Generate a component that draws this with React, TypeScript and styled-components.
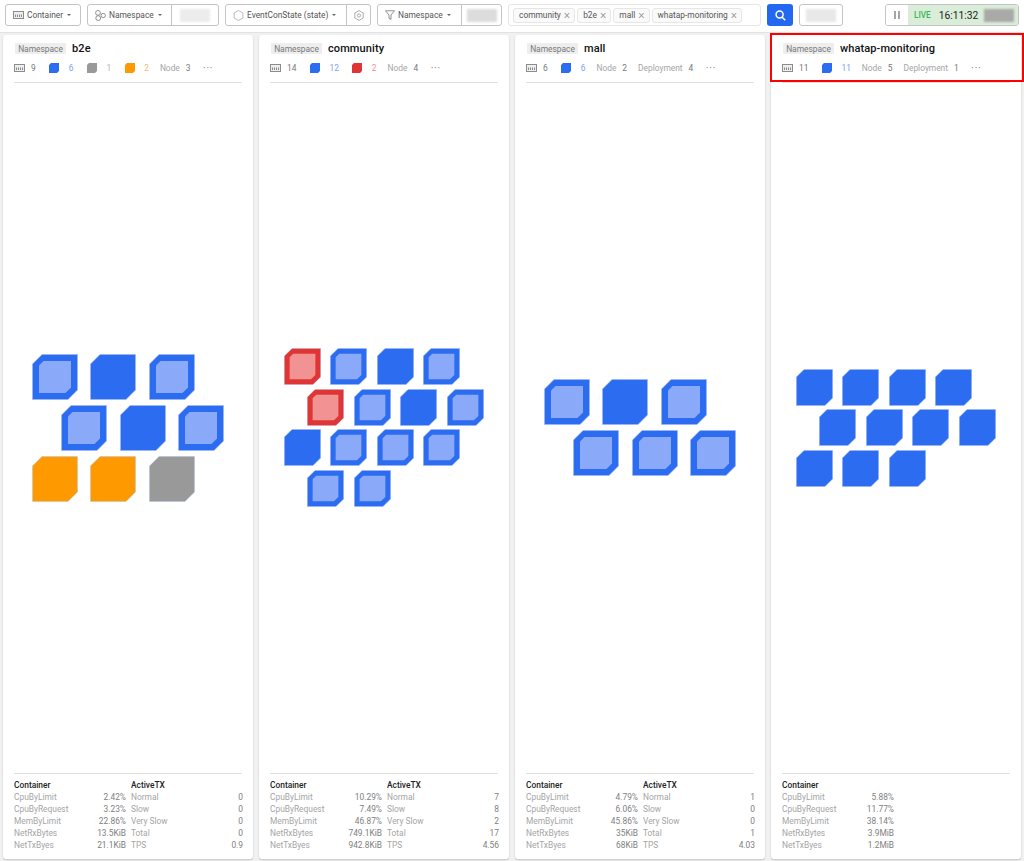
import React from 'react'
import styled, { createGlobalStyle } from 'styled-components'

const GlobalStyle = createGlobalStyle`
    html, body {
        margin: 0;
        padding: 0;
        background: #f1f1f1;
    }
    * {
        box-sizing: border-box;
    }
    body {
        font-family: Roboto, "Liberation Sans", sans-serif;
    }
`

type Tone = 'blue' | 'gray' | 'orange' | 'red'
type Cell = { tone: Tone; inner?: boolean }

const toneColor: Record<Tone, string> = {
    blue: '#2b6cf0',
    gray: '#999999',
    orange: '#ff9900',
    red: '#e03535',
}

const innerColor: Record<Tone, string> = {
    blue: '#8aa9f8',
    gray: '#c4c4c4',
    orange: '#ffc266',
    red: '#f29393',
}

const textTone: Record<Tone, string> = {
    blue: '#7f9ff0',
    gray: '#b5b5b5',
    orange: '#f8b66e',
    red: '#ef8f8f',
}

const B: Cell = { tone: 'blue' }
const BI: Cell = { tone: 'blue', inner: true }
const RI: Cell = { tone: 'red', inner: true }
const O: Cell = { tone: 'orange' }
const G: Cell = { tone: 'gray' }

type Stat = { label: string; value: string }
type CardData = {
    name: string
    size: number
    counts: { tone: Tone; value: number }[]
    total: number
    extras: Stat[]
    rows: Cell[][]
    container: string[]
    active?: string[]
    selected?: boolean
}

const cards: CardData[] = [
    {
        name: 'b2e',
        size: 46,
        total: 9,
        counts: [{ tone: 'blue', value: 6 }, { tone: 'gray', value: 1 }, { tone: 'orange', value: 2 }],
        extras: [{ label: 'Node', value: '3' }],
        rows: [[BI, B, BI], [BI, B, BI], [O, O, G]],
        container: ['2.42%', '3.23%', '22.86%', '13.5KiB', '21.1KiB'],
        active: ['0', '0', '0', '0', '0.9'],
    },
    {
        name: 'community',
        size: 37,
        total: 14,
        counts: [{ tone: 'blue', value: 12 }, { tone: 'red', value: 2 }],
        extras: [{ label: 'Node', value: '4' }],
        rows: [[RI, BI, B, BI], [RI, BI, B, BI], [B, BI, BI, BI], [BI, BI]],
        container: ['10.29%', '7.49%', '46.87%', '749.1KiB', '942.8KiB'],
        active: ['7', '8', '2', '17', '4.56'],
    },
    {
        name: 'mall',
        size: 46,
        total: 6,
        counts: [{ tone: 'blue', value: 6 }],
        extras: [{ label: 'Node', value: '2' }, { label: 'Deployment', value: '4' }],
        rows: [[BI, B, BI], [BI, BI, BI]],
        container: ['4.79%', '6.06%', '45.86%', '35KiB', '68KiB'],
        active: ['1', '0', '0', '1', '4.03'],
    },
    {
        name: 'whatap-monitoring',
        size: 37,
        total: 11,
        counts: [{ tone: 'blue', value: 11 }],
        extras: [{ label: 'Node', value: '5' }, { label: 'Deployment', value: '1' }],
        rows: [[B, B, B, B], [B, B, B, B], [B, B, B]],
        container: ['5.88%', '11.77%', '38.14%', '3.9MiB', '1.2MiB'],
        selected: true,
    },
]

const containerLabels = ['CpuByLimit', 'CpuByRequest', 'MemByLimit', 'NetRxBytes', 'NetTxByes']
const activeLabels = ['Normal', 'Slow', 'Very Slow', 'Total', 'TPS']

function HostIcon() {
    return (
        <svg width="11" height="8" viewBox="0 0 11 8" fill="none">
            <rect x="0.5" y="0.5" width="10" height="7" fill="#eeeeee" stroke="#8c8c8c" />
            <path d="M2.5 3.5v2.5M4.5 3.5v2.5M6.5 3.5v2.5M8.5 3.5v2.5" stroke="#8c8c8c" strokeWidth="1" />
        </svg>
    )
}

function NamespaceIcon() {
    return (
        <svg width="11" height="11" viewBox="0 0 11 11" fill="none" stroke="#777777" strokeWidth="0.8">
            <circle cx="3" cy="2.9" r="2.4" />
            <circle cx="8.2" cy="5.5" r="2.2" />
            <circle cx="3.2" cy="8.1" r="2.4" />
        </svg>
    )
}

function StateIcon() {
    return (
        <svg width="11" height="11" viewBox="0 0 11 11" fill="none" stroke="#aaaaaa" strokeWidth="0.8">
            <path d="M5.5 0.5l4.4 2.5v5l-4.4 2.5-4.4-2.5V3z" />
        </svg>
    )
}

function GearIcon() {
    return (
        <svg width="10" height="11" viewBox="0 0 10 11" fill="none" stroke="#999999" strokeWidth="0.8">
            <path d="M5 0.6l4.2 2.4v5L5 10.4.8 8V3z" />
            <circle cx="5" cy="5.5" r="1.6" />
        </svg>
    )
}

function FilterIcon() {
    return (
        <svg width="10" height="10" viewBox="0 0 10 10" fill="none" stroke="#777777" strokeWidth="0.8">
            <path d="M0.5 0.8h9L6 5v4.4L4 8.4V5z" />
        </svg>
    )
}

function SearchIcon() {
    return (
        <svg width="11" height="11" viewBox="0 0 11 11" fill="none" stroke="#ffffff" strokeWidth="1.5">
            <circle cx="4.6" cy="4.6" r="3.5" />
            <path d="M7.2 7.2l3 3" />
        </svg>
    )
}

function Cube({ tone, inner, size }: Cell & { size: number }) {
    return (
        <svg width={size} height={size} viewBox="0 0 46 46">
            <polygon
                points="10,0.5 45.5,0.5 45.5,36 36,45.5 0.5,45.5 0.5,10"
                fill={toneColor[tone]}
                stroke="#9db8f8"
                strokeOpacity={tone === 'blue' ? 0.6 : 0.35}
                strokeWidth="1"
            />
            {inner && <polygon points="11.5,7 39,7 39,33.5 33.5,39 7,39 7,11.5" fill={innerColor[tone]} />}
        </svg>
    )
}

function MiniCube({ tone }: { tone: Tone }) {
    return (
        <svg width="10" height="10" viewBox="0 0 10 10">
            <polygon points="2,0 10,0 10,8 8,10 0,10 0,2" fill={toneColor[tone]} />
        </svg>
    )
}

export default function App() {
    return (
        <Page>
            <GlobalStyle />
            <Toolbar>
                <Group>
                    <Segment $width={75}>
                        <HostIcon />
                        <Label>Container</Label>
                        <Caret />
                    </Segment>
                </Group>
                <Group>
                    <Segment $width={84}>
                        <NamespaceIcon />
                        <Label>Namespace</Label>
                        <Caret />
                    </Segment>
                    <BlurSegment $width={48}>
                        <Blur $shade="#ececec" />
                    </BlurSegment>
                </Group>
                <Group>
                    <Segment $width={121}>
                        <StateIcon />
                        <Label>EventConState (state)</Label>
                        <Caret />
                    </Segment>
                    <BlurSegment $width={25}>
                        <GearIcon />
                    </BlurSegment>
                </Group>
                <Group>
                    <Segment $width={84}>
                        <FilterIcon />
                        <Label>Namespace</Label>
                        <Caret />
                    </Segment>
                    <BlurSegment $width={41}>
                        <Blur $shade="#dcdcdc" />
                    </BlurSegment>
                </Group>
                <TagInput>
                    {['community', 'b2e', 'mall', 'whatap-monitoring'].map((tag) => (
                        <Tag key={tag}>
                            {tag}
                            <TagClose>×</TagClose>
                        </Tag>
                    ))}
                </TagInput>
                <SearchButton>
                    <SearchIcon />
                </SearchButton>
                <Group>
                    <BlurSegment $width={43}>
                        <Blur $shade="#e8e8e8" />
                    </BlurSegment>
                </Group>
                <LiveGroup>
                    <PauseBox>
                        <PauseBar />
                        <PauseBar />
                    </PauseBox>
                    <LivePanel>
                        <LiveText>LIVE</LiveText>
                        <Clock>16:11:32</Clock>
                        <Blur $shade="#aaa9a8" />
                    </LivePanel>
                </LiveGroup>
            </Toolbar>
            <Board>
                {cards.map((card) => (
                    <Card key={card.name}>
                        {card.selected && <Highlight />}
                        <CardHeader>
                            <TitleRow>
                                <KindTag>Namespace</KindTag>
                                <Title>{card.name}</Title>
                            </TitleRow>
                            <SummaryRow>
                                <SummaryItem $gap={6}>
                                    <HostIcon />
                                    <SummaryValue>{card.total}</SummaryValue>
                                </SummaryItem>
                                {card.counts.map((count) => (
                                    <SummaryItem $gap={9.5} key={count.tone}>
                                        <MiniCube tone={count.tone} />
                                        <ToneValue $tone={count.tone}>{count.value}</ToneValue>
                                    </SummaryItem>
                                ))}
                                {card.extras.map((extra) => (
                                    <ExtraItem $gap={6} key={extra.label}>
                                        <SummaryLabel>{extra.label}</SummaryLabel>
                                        <SummaryValue>{extra.value}</SummaryValue>
                                    </ExtraItem>
                                ))}
                                <More>···</More>
                            </SummaryRow>
                        </CardHeader>
                        <Cluster $size={card.size}>
                            {card.rows.map((row, rowIndex) => (
                                <CubeRow key={rowIndex} $size={card.size} $odd={rowIndex % 2 === 1}>
                                    {row.map((cell, cellIndex) => (
                                        <Cube key={cellIndex} size={card.size} {...cell} />
                                    ))}
                                </CubeRow>
                            ))}
                        </Cluster>
                        <CardFooter>
                            <StatColumn>
                                <StatHead>Container</StatHead>
                                {card.container.map((value, index) => (
                                    <StatRow key={containerLabels[index]}>
                                        <span>{containerLabels[index]}</span>
                                        <StatValue>{value}</StatValue>
                                    </StatRow>
                                ))}
                            </StatColumn>
                            {card.active && (
                                <StatColumn>
                                    <StatHead>ActiveTX</StatHead>
                                    {card.active.map((value, index) => (
                                        <StatRow key={activeLabels[index]}>
                                            <span>{activeLabels[index]}</span>
                                            <StatValue>{value}</StatValue>
                                        </StatRow>
                                    ))}
                                </StatColumn>
                            )}
                        </CardFooter>
                    </Card>
                ))}
            </Board>
        </Page>
    )
}

const Page = styled.div`
    width: 1024px;
    height: 861px;
    overflow: hidden;
    display: flex;
    flex-direction: column;
    background: #f1f1f1;
`

const Toolbar = styled.div`
    height: 33px;
    display: flex;
    align-items: flex-start;
    gap: 6px;
    padding: 4px 5px 0;
    background: #ffffff;
    border-bottom: 1px solid #e2e2e2;
    flex-shrink: 0;
`

const Group = styled.div`
    display: flex;
    height: 22px;
    background: #fff;
    border: 1px solid #c4c4c4;
    border-radius: 3px;
    flex-shrink: 0;
`

const Segment = styled.div<{ $width: number }>`
    width: ${(p) => p.$width - 1}px;
    display: flex;
    align-items: center;
    gap: 3px;
    padding-left: 7px;
    color: #555;
`

const BlurSegment = styled.div<{ $width: number }>`
    width: ${(p) => p.$width - 1}px;
    display: flex;
    align-items: center;
    justify-content: center;
    ${Segment} + & {
        border-left: 1px solid #c4c4c4;
    }
`

const Label = styled.span`
    font-size: 8.4px;
    color: #555555;
    white-space: nowrap;
`

const Caret = styled.span`
    width: 0;
    height: 0;
    margin-left: 1px;
    border-left: 2px solid transparent;
    border-right: 2px solid transparent;
    border-top: 2px solid #666;
`

const Blur = styled.div<{ $shade: string }>`
    width: 30px;
    height: 13px;
    flex-shrink: 0;
    background: ${(p) => p.$shade};
    filter: blur(0.8px);
`

const TagInput = styled.div`
    width: 253px;
    height: 22px;
    display: flex;
    align-items: center;
    gap: 2px;
    padding: 0 2px 0 4px;
    border: 1px solid #e6e6e6;
    border-radius: 3px;
    flex-shrink: 0;
`

const Tag = styled.span`
    height: 15px;
    display: flex;
    align-items: center;
    gap: 3px;
    padding: 0 4px 0 5px;
    font-size: 8.4px;
    color: #555;
    background: #fafafa;
    border: 1px solid #e6e6e6;
    border-radius: 3px;
    white-space: nowrap;
`

const TagClose = styled.span`
    font-size: 12px;
    font-weight: 300;
    color: #888;
    line-height: 1;
`

const SearchButton = styled.div`
    width: 26px;
    height: 22px;
    display: flex;
    align-items: center;
    justify-content: center;
    background: #2468f2;
    border-radius: 3px;
    flex-shrink: 0;
`

const LiveGroup = styled.div`
    width: 134px;
    height: 22px;
    display: flex;
    margin-left: 36px;
    border: 1px solid #c4c4c4;
    border-radius: 3px;
    overflow: hidden;
    flex-shrink: 0;
`

const PauseBox = styled.div`
    width: 22px;
    display: flex;
    align-items: center;
    justify-content: center;
    gap: 2px;
    background: #fff;
    flex-shrink: 0;
`

const PauseBar = styled.span`
    width: 2px;
    height: 8px;
    background: #a5a5a5;
`

const LivePanel = styled.div`
    flex: 1;
    display: flex;
    align-items: center;
    padding-left: 6px;
    background: #d9edd9;
`

const LiveText = styled.span`
    font-size: 8.2px;
    font-weight: 500;
    color: #3cb45c;
    margin-right: 8px;
`

const Clock = styled.span`
    font-size: 10.3px;
    color: #222;
    margin-right: 6px;
`

const Board = styled.div`
    flex: 1;
    min-height: 0;
    display: grid;
    grid-template-columns: repeat(4, 250px);
    gap: 6px;
    padding: 2px 3px 2px;
`

const Card = styled.div`
    position: relative;
    display: flex;
    flex-direction: column;
    padding: 0 11px 8px;
    background: #fff;
    border-radius: 3px;
    box-shadow: 0 1px 2px rgba(0, 0, 0, 0.2);
`

const Highlight = styled.div`
    position: absolute;
    left: -1px;
    top: -2px;
    right: -3px;
    height: 49px;
    border: 2px solid #ff0000;
    pointer-events: none;
`

const CardHeader = styled.div`
    height: 48px;
    padding-top: 7px;
    border-bottom: 1px solid #e0e0e0;
    flex-shrink: 0;
`

const TitleRow = styled.div`
    display: flex;
    align-items: center;
    gap: 6px;
    height: 13px;
`

const KindTag = styled.span`
    height: 11px;
    width: 51px;
    margin-left: 1px;
    display: flex;
    align-items: center;
    justify-content: center;
    font-size: 8.4px;
    color: #777;
    background: #eeeeee;
    border-radius: 1px;
`

const Title = styled.span`
    font-size: 11px;
    font-weight: 500;
    color: #111;
    letter-spacing: 0.1px;
`

const SummaryRow = styled.div`
    display: flex;
    align-items: center;
    gap: 13.5px;
    margin-top: 7px;
    height: 12px;
`

const SummaryItem = styled.div<{ $gap: number }>`
    display: flex;
    align-items: center;
    gap: ${(p) => p.$gap}px;
`

const ExtraItem = styled(SummaryItem)`
    margin-left: -2.5px;
`

const SummaryValue = styled.span`
    font-size: 8.4px;
    color: #777;
`

const SummaryLabel = styled.span`
    font-size: 8.4px;
    color: #a5a5a5;
`

const ToneValue = styled.span<{ $tone: Tone }>`
    font-size: 8.4px;
    color: ${(p) => textTone[p.$tone]};
`

const More = styled.span`
    font-size: 10px;
    color: #777;
    letter-spacing: 0.8px;
    margin-left: -1px;
`

const Cluster = styled.div<{ $size: number }>`
    flex: 1;
    display: flex;
    flex-direction: column;
    justify-content: center;
    gap: ${(p) => (p.$size === 46 ? 5 : 3.5)}px;
    padding-bottom: 1px;
`

const CubeRow = styled.div<{ $size: number; $odd: boolean }>`
    display: flex;
    gap: ${(p) => (p.$size === 46 ? 12.5 : 9.5)}px;
    margin-left: ${(p) => {
        const indent = p.$size === 46 ? 17.5 : 13.5
        return p.$odd ? indent + (p.$size === 46 ? 29.5 : 23.5) : indent
    }}px;
`

const CardFooter = styled.div`
    height: 78px;
    display: grid;
    grid-template-columns: 112px 112px;
    column-gap: 5px;
    padding-top: 5px;
    border-top: 1px solid #e0e0e0;
    flex-shrink: 0;
`

const StatColumn = styled.div`
    display: flex;
    flex-direction: column;
`

const StatHead = styled.div`
    height: 12px;
    font-size: 8.4px;
    font-weight: 500;
    color: #222;
    line-height: 12px;
`

const StatRow = styled.div`
    height: 12px;
    display: flex;
    justify-content: space-between;
    font-size: 8.4px;
    line-height: 12px;
    color: #a5a5a5;
`

const StatValue = styled.span`
    color: #808080;
`
